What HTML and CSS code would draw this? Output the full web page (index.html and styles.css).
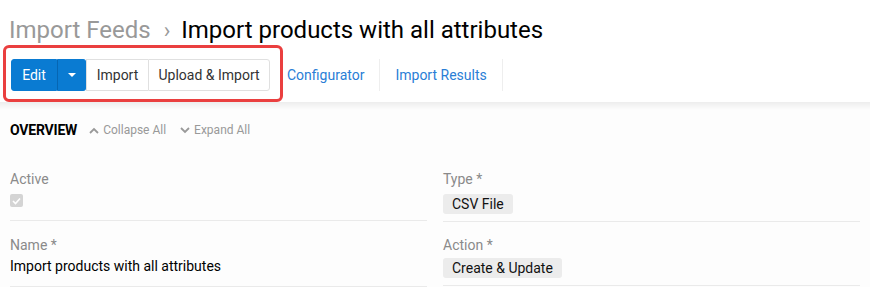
FILE: index.html
```html
<!DOCTYPE html>
<html>
<head>
<meta charset="utf-8">
<link rel="stylesheet" href="styles.css">
</head>
<body>
<div class="header">
  <h1 class="title"><span class="crumb">Import Feeds</span><span class="sep">›</span><span class="current">Import products with all attributes</span></h1>
  <div class="toolbar">
    <div class="btn-group">
      <button class="btn primary edit">Edit</button>
      <button class="btn primary caret"><span class="tri"></span></button>
      <button class="btn light">Import</button>
      <button class="btn light">Upload &amp; Import</button>
    </div>
    <div class="tabs">
      <a class="tab">Configurator</a>
      <a class="tab">Import Results</a>
    </div>
  </div>
  <div class="highlight"></div>
</div>
<div class="shadow"></div>
<div class="content">
  <div class="panel-head">
    <span class="panel-title">OVERVIEW</span>
    <span class="panel-link"><svg width="10" height="7" viewBox="0 0 10 7"><path d="M1 6 L5 2 L9 6" fill="none" stroke="#999" stroke-width="1.8"/></svg>Collapse All</span>
    <span class="panel-link"><svg width="10" height="7" viewBox="0 0 10 7"><path d="M1 1 L5 5 L9 1" fill="none" stroke="#999" stroke-width="1.8"/></svg>Expand All</span>
  </div>
  <div class="fields">
    <div class="col left">
      <div class="cell">
        <div class="label">Active</div>
        <div class="value"><span class="checkbox"><svg width="9" height="8" viewBox="0 0 9 8"><path d="M1 4 L3.5 6.5 L8 1.5" fill="none" stroke="#fff" stroke-width="1.6"/></svg></span></div>
      </div>
      <div class="cell second">
        <div class="label">Name *</div>
        <div class="value text">Import products with all attributes</div>
      </div>
    </div>
    <div class="col right">
      <div class="cell">
        <div class="label">Type *</div>
        <div class="value"><span class="badge">CSV File</span></div>
      </div>
      <div class="cell second">
        <div class="label">Action *</div>
        <div class="value"><span class="badge">Create &amp; Update</span></div>
      </div>
    </div>
  </div>
</div>
</body>
</html>
```
FILE: styles.css
```css
* { box-sizing: border-box; }
body {
  margin: 0;
  font-family: Roboto, "Liberation Sans", sans-serif;
  background: #fff;
  color: #000;
}
.header {
  position: relative;
  background: #fff;
  padding: 16px 10px 11px 9px;
}
.title {
  margin: 0;
  font-size: 24px;
  font-weight: 400;
  line-height: 29px;
  white-space: nowrap;
}
.crumb { color: #999; }
.sep { color: #999; margin: 0 11px 0 13px; font-size: 22px; }
.current { color: #000; }
.toolbar {
  display: flex;
  align-items: center;
  margin-top: 14px;
  height: 32px;
}
.btn-group {
  display: flex;
  margin-left: 2px;
}
.btn {
  font-family: inherit;
  font-size: 14px;
  height: 32px;
  border: 1px solid #e0e0e0;
  background: #fff;
  color: #333;
  padding: 0;
  margin: 0;
}
.btn.primary {
  background: #0a7bd2;
  border-color: #0a7bd2;
  color: #fff;
}
.edit {
  width: 46px;
  border-radius: 3px 0 0 3px;
}
.caret {
  width: 29px;
  border-left: 1px solid #0666b3 !important;
  border-radius: 0 3px 3px 0;
  display: flex;
  align-items: center;
  justify-content: center;
}
.tri {
  width: 0; height: 0;
  border-left: 4px solid transparent;
  border-right: 4px solid transparent;
  border-top: 4px solid #fff;
}
.light { width: 62px; border-right: none; border-left: 1px solid #e0e0e0; border-radius: 0; }
.light + .light { width: 122px; border-right: 1px solid #e0e0e0; border-radius: 0 3px 3px 0; }
.tabs {
  display: flex;
  height: 32px;
  margin-left: 2px;
}
.tab {
  display: flex;
  align-items: center;
  font-size: 14px;
  color: #2a7ed6;
  padding: 0 15px;
  border-right: 1px solid #eeeeee;
}
.highlight {
  position: absolute;
  left: 3px;
  top: 45px;
  width: 280px;
  height: 57px;
  border: 3px solid #ea3f3f;
  border-radius: 6px;
}
.shadow {
  height: 8px;
  background: linear-gradient(#ededed, #fdfdfd);
}
.content {
  background: #fdfdfd;
  padding: 10px 10px 0 10px;
}
.panel-head {
  display: flex;
  align-items: center;
  height: 20px;
  line-height: 20px;
}
.panel-title {
  font-size: 14px;
  font-weight: 700;
  letter-spacing: -0.2px;
  margin-right: 12px;
}
.panel-link {
  display: flex;
  align-items: center;
  gap: 4px;
  font-size: 12px;
  color: #999;
  margin-right: 14px;
}
.fields {
  display: flex;
  gap: 16px;
  margin-top: 29px;
}
.col {
  flex: 1;
  display: flex;
  flex-direction: column;
}
.cell {
  border-bottom: 1px solid #eaeaea;
}
.left .cell { padding-bottom: 9px; }
.right .cell { padding-bottom: 7px; }
.left .cell.second { padding-top: 14px; }
.right .cell.second { padding-top: 13px; }
.label {
  font-size: 14px;
  line-height: 20px;
  color: #8a8a8a;
}
.value {
  font-size: 14px;
  line-height: 22px;
  min-height: 22px;
  display: flex;
  align-items: flex-start;
}
.value.text { color: #000; }
.checkbox {
  width: 13px;
  height: 13px;
  border-radius: 2px;
  background: #d4d4d4;
  display: flex;
  align-items: center;
  justify-content: center;
  margin-top: 5px;
}
.badge {
  display: inline-block;
  background: #ececec;
  color: #111;
  border-radius: 3px;
  padding: 0 9px;
  height: 20px;
  line-height: 20px;
  margin-top: 5px;
}
.second .badge { margin-top: 3px; }
```
